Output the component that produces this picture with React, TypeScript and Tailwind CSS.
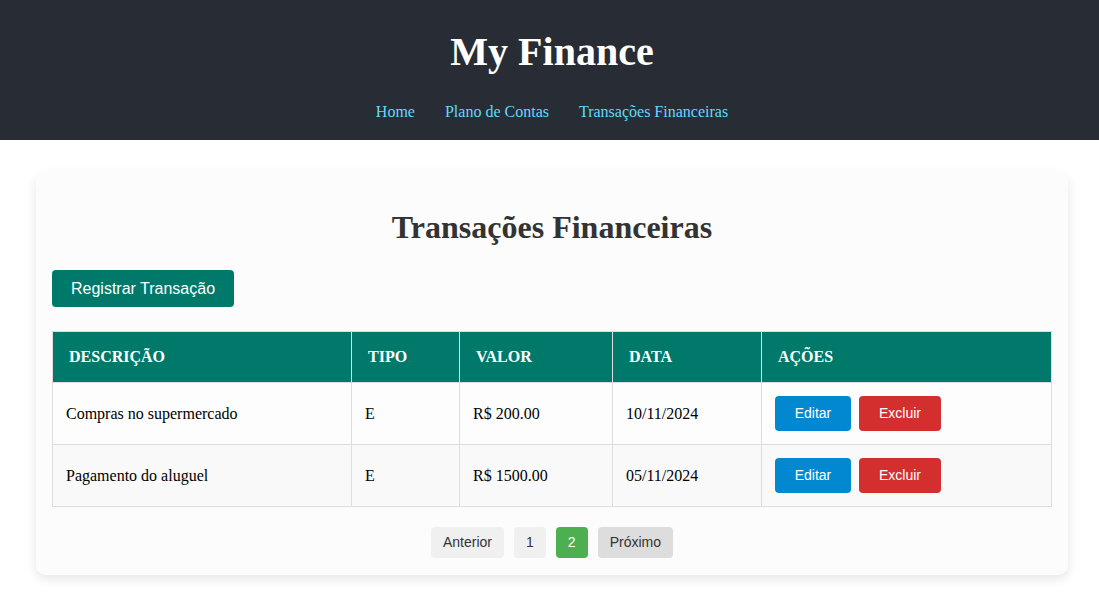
import React from "react";

const transactions = [
  { descricao: "Compras no supermercado", tipo: "E", valor: "R$ 200.00", data: "10/11/2024" },
  { descricao: "Pagamento do aluguel", tipo: "E", valor: "R$ 1500.00", data: "05/11/2024" },
];

const navLinks = ["Home", "Plano de Contas", "Transações Financeiras"];

const columns = [
  { label: "Descrição", width: "w-[299px]" },
  { label: "Tipo", width: "w-[108px]" },
  { label: "Valor", width: "w-[153px]" },
  { label: "Data", width: "w-[149px]" },
  { label: "Ações", width: "" },
];

const App = () => {
  return (
    <div className="min-h-screen bg-white font-['Liberation_Serif','Times_New_Roman',serif] text-black">
      <header className="h-[140px] bg-[#282c34] pl-[5px] flex flex-col items-center">
        <h1 className="mt-[29px] text-[40px] leading-[46px] font-bold text-white">My Finance</h1>
        <nav className="mt-[28px] flex text-[16px] leading-[18px]">
          {navLinks.map((link) => (
            <a key={link} href="#" className="mx-[15px] text-[#61dafb]">
              {link}
            </a>
          ))}
        </nav>
      </header>

      <main className="ml-[36px] mt-[32px] w-[1032px] rounded-[10px] bg-[#fcfcfc] px-4 pt-4 pb-[17px] shadow-[0_4px_12px_rgba(0,0,0,0.1)]">
        <h2 className="mt-[21px] mb-[24px] text-center text-[32px] leading-[37px] font-bold text-[#333]">
          Transações Financeiras
        </h2>

        <button className="rounded-[4px] bg-[#00796b] px-[19px] py-[10px] font-['Liberation_Sans',Arial,sans-serif] text-[16px] leading-[17px] text-white">
          Registrar Transação
        </button>

        <table className="mt-[24px] w-[1000px] border-collapse border border-[#ddd]">
          <thead>
            <tr className="bg-[#00796b]">
              {columns.map((col) => (
                <th
                  key={col.label}
                  className={`${col.width} border border-[#ddd] pl-4 pr-3 py-4 text-left text-[16px] leading-[18px] font-bold uppercase text-white`}
                >
                  {col.label}
                </th>
              ))}
            </tr>
          </thead>
          <tbody>
            {transactions.map((t, i) => (
              <tr key={i} className={i % 2 === 0 ? "bg-[#fdfdfd]" : "bg-[#f9f9f9]"}>
                <td className="border border-[#ddd] px-[13px] py-[13px] text-[16px]">{t.descricao}</td>
                <td className="border border-[#ddd] px-[13px] py-[13px] text-[16px]">{t.tipo}</td>
                <td className="border border-[#ddd] px-[13px] py-[13px] text-[16px]">{t.valor}</td>
                <td className="border border-[#ddd] px-[13px] py-[13px] text-[16px]">{t.data}</td>
                <td className="border border-[#ddd] px-[13px] py-[13px]">
                  <div className="flex gap-2 font-['Liberation_Sans',Arial,sans-serif] text-[14px] leading-[17px] text-white">
                    <button className="w-[76px] rounded-[4px] bg-[#0288d1] py-[9px]">Editar</button>
                    <button className="w-[82px] rounded-[4px] bg-[#d32f2f] py-[9px]">Excluir</button>
                  </div>
                </td>
              </tr>
            ))}
          </tbody>
        </table>

        <div className="mt-[20px] flex justify-center gap-[10px] font-['Liberation_Sans',Arial,sans-serif] text-[14px] leading-[15px] text-[#333]">
          <button className="rounded-[4px] bg-[#f0f0f0] px-3 py-2">Anterior</button>
          <button className="rounded-[4px] bg-[#f0f0f0] px-3 py-2">1</button>
          <button className="rounded-[4px] bg-[#4caf50] px-3 py-2 text-white">2</button>
          <button className="rounded-[4px] bg-[#ddd] px-3 py-2">Próximo</button>
        </div>
      </main>
    </div>
  );
};

export default App;
